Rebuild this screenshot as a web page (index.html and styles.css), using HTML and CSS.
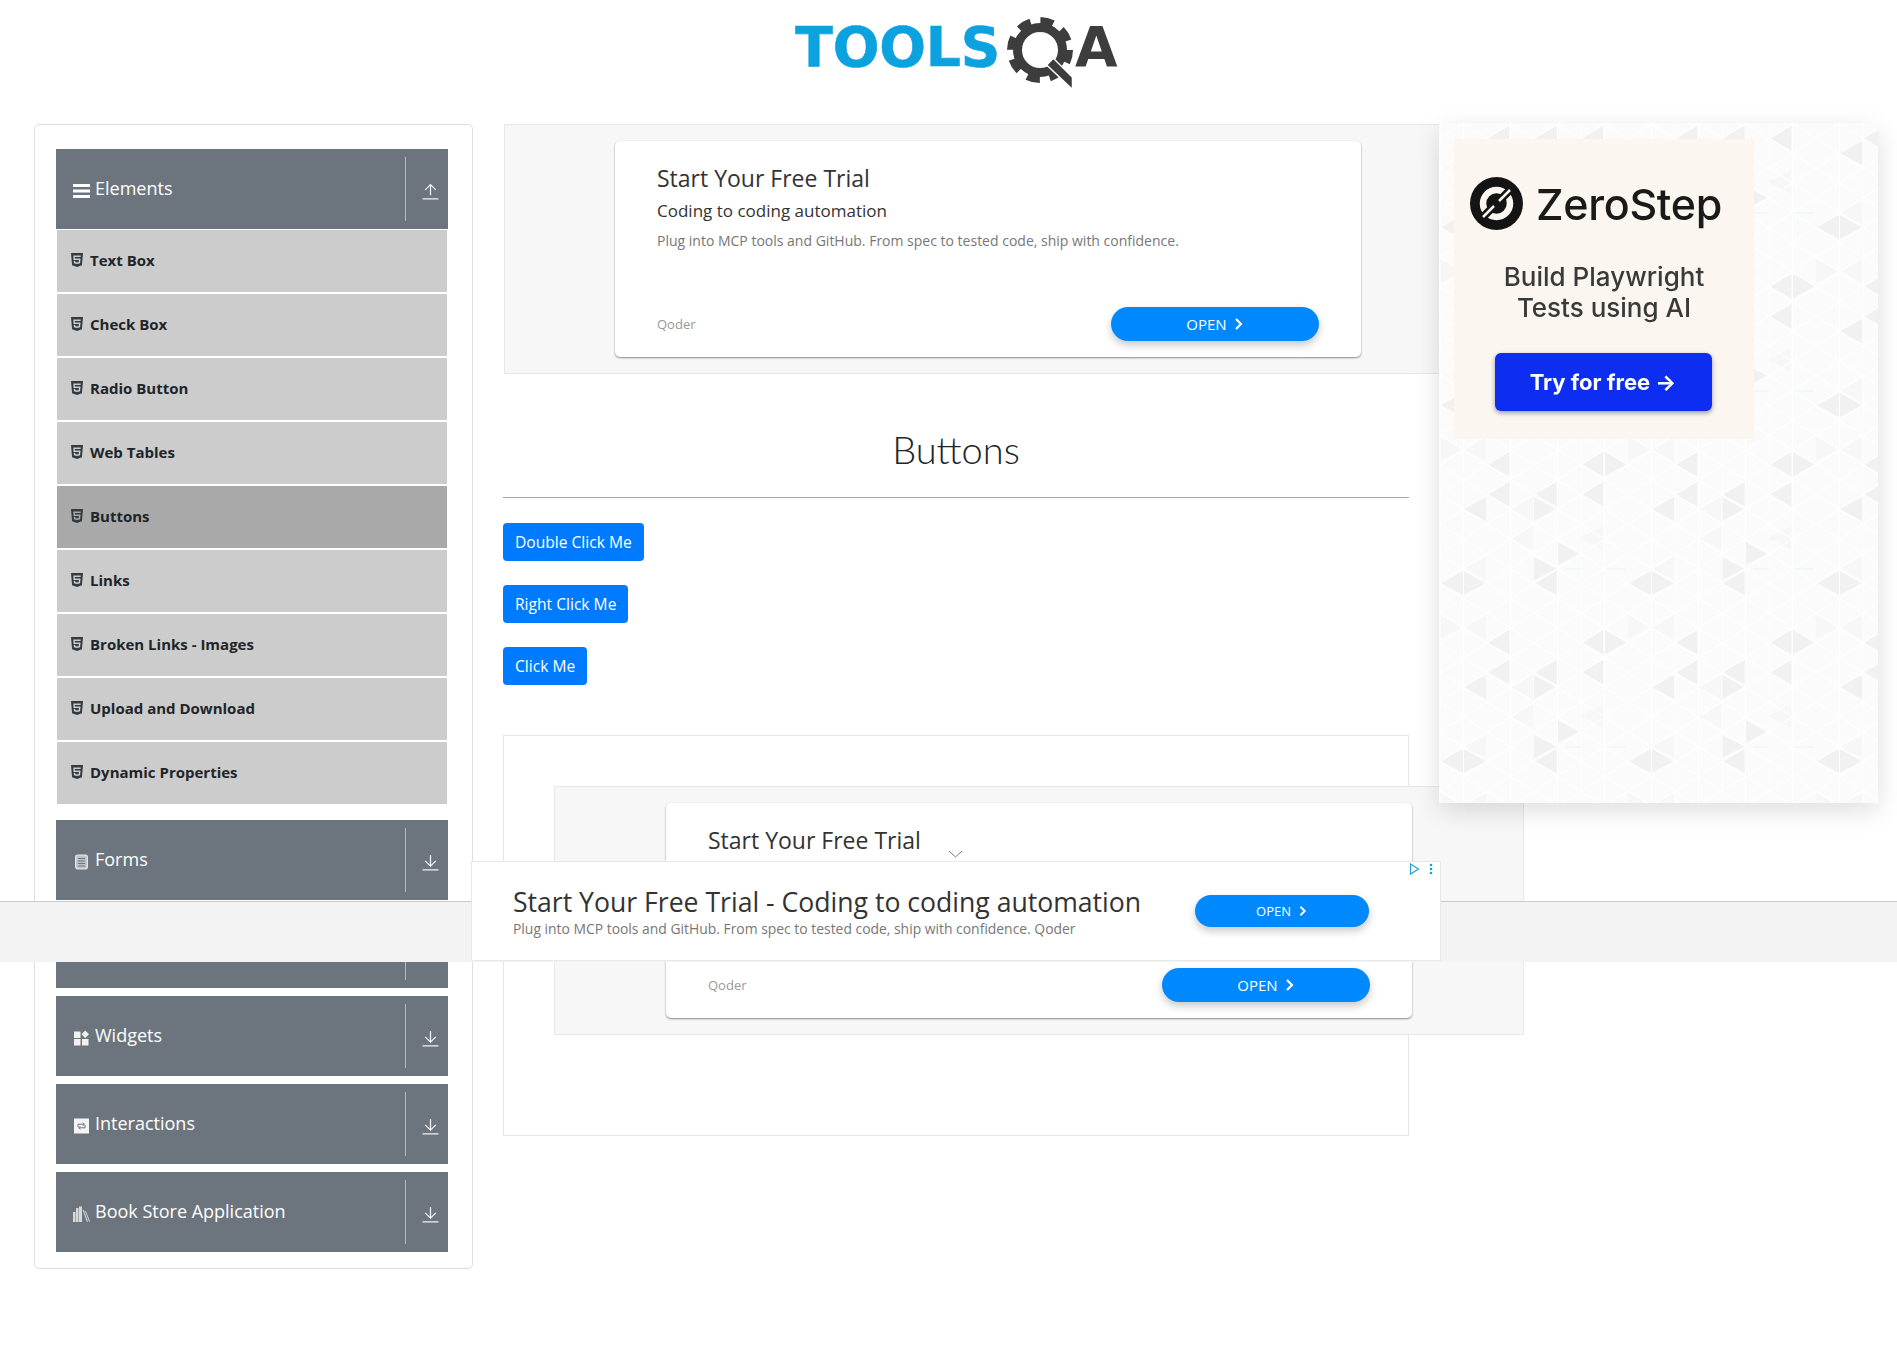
FILE: index.html
```html
<!DOCTYPE html>
<html>
<head>
<title>ToolsQA</title>
<link rel="stylesheet" href="styles.css">
</head>
<body>

<svg class="defs" width="0" height="0">
  <symbol id="i-html5" viewBox="0 0 384 512"><path d="M0 32l34.9 395.8L191.5 480l157.6-52.2L384 32H0zm308.2 127.9H124.4l4.1 49.4h175.6l-13.6 148.4-97.9 27v.3h-1.1l-98.7-27.3-6-75.8h47.7L138 320l53.5 14.5 53.7-14.5 6-62.2H84.3L71.5 112.2h241.1l-4.4 47.7z"/></symbol>
  <symbol id="i-up" viewBox="0 0 16 16"><path d="M8 11.500V1.500M3 6.500l5-5 5 5M.5 15h15" fill="none" stroke="currentColor" stroke-width="1.2"/></symbol>
  <symbol id="i-down" viewBox="0 0 16 16"><path d="M8 1v10.500M3 6.500l5 5 5-5M.5 15h15" fill="none" stroke="currentColor" stroke-width="1.2"/></symbol>
  <symbol id="i-chevron" viewBox="0 0 10 14"><path d="M2 2l5 5-5 5" fill="none" stroke="currentColor" stroke-width="2.2"/></symbol>
</svg>

<header class="logo">
  <span class="logo-tools">TOOLS</span>
  <svg class="logo-gear" width="68" height="76" viewBox="0 0 68 76">
    <g fill="none" stroke="#3d3d3d">
      <circle cx="34" cy="34" r="22.5" stroke-width="9"/>
      <circle cx="34" cy="34" r="29.5" stroke-width="7" stroke-dasharray="13.2 10"/>
    </g>
    <path d="M40.7 49 47.3 42.3 66.500 61.300V73.500z" fill="#3d3d3d" stroke="#fff" stroke-width="1.500"/>
  </svg>
  <span class="logo-a">A</span>
</header>

<div class="page">
  <aside class="sidebar">

    <section class="group">
      <div class="group-header">
        <svg class="group-icon" width="17" height="14" viewBox="0 0 17 14" fill="#fff"><rect y="0" width="17" height="3"/><rect y="5.500" width="17" height="3"/><rect y="11" width="17" height="3"/></svg>
        <span class="group-name">Elements</span>
        <span class="group-toggle"><svg width="16" height="16"><use href="#i-up"/></svg></span>
      </div>
      <ul class="menu">
        <li class="menu-item"><svg class="html5" width="12" height="16"><use href="#i-html5"/></svg>Text Box</li>
        <li class="menu-item"><svg class="html5" width="12" height="16"><use href="#i-html5"/></svg>Check Box</li>
        <li class="menu-item"><svg class="html5" width="12" height="16"><use href="#i-html5"/></svg>Radio Button</li>
        <li class="menu-item"><svg class="html5" width="12" height="16"><use href="#i-html5"/></svg>Web Tables</li>
        <li class="menu-item active"><svg class="html5" width="12" height="16"><use href="#i-html5"/></svg>Buttons</li>
        <li class="menu-item"><svg class="html5" width="12" height="16"><use href="#i-html5"/></svg>Links</li>
        <li class="menu-item"><svg class="html5" width="12" height="16"><use href="#i-html5"/></svg>Broken Links - Images</li>
        <li class="menu-item"><svg class="html5" width="12" height="16"><use href="#i-html5"/></svg>Upload and Download</li>
        <li class="menu-item"><svg class="html5" width="12" height="16"><use href="#i-html5"/></svg>Dynamic Properties</li>
      </ul>
    </section>

    <section class="group">
      <div class="group-header">
        <svg class="group-icon" width="17" height="16" viewBox="0 0 17 16"><rect x="2.600" y="1.200" width="11.800" height="13.600" rx="2" fill="#bfc2c5" stroke="#e4e5e6" stroke-width="1.200"/><path d="M5 4.500h7M5 7h7M5 9.500h7M5 12h7" stroke="#6c757d" stroke-width="1"/></svg>
        <span class="group-name">Forms</span>
        <span class="group-toggle"><svg width="16" height="16"><use href="#i-down"/></svg></span>
      </div>
    </section>

    <section class="group">
      <div class="group-header">
        <svg class="group-icon" width="17" height="16" viewBox="0 0 17 16"><rect x="1" y="1" width="7" height="7"/></svg>
        <span class="group-name">Alerts, Frame &amp; Windows</span>
        <span class="group-toggle"><svg width="16" height="16"><use href="#i-down"/></svg></span>
      </div>
    </section>

    <section class="group">
      <div class="group-header">
        <svg class="group-icon" width="17" height="16" viewBox="0 0 17 16" fill="#f1f1f1"><rect x="1" y="1.500" width="6.500" height="6.500"/><rect x="1" y="9" width="6.500" height="6.500"/><rect x="9" y="9" width="6.500" height="6.500"/><path d="M12.200.5 16 4.300l-3.800 3.700-3.700-3.700z"/></svg>
        <span class="group-name">Widgets</span>
        <span class="group-toggle"><svg width="16" height="16"><use href="#i-down"/></svg></span>
      </div>
    </section>

    <section class="group">
      <div class="group-header">
        <svg class="group-icon" width="17" height="16" viewBox="0 0 17 16"><rect x="1" y="0.500" width="15" height="15" fill="#f4f4f4"/><path d="M5 9V6.200h6M9.800 4.600l1.600 1.600-1.600 1.600M12 7v2.800H6M7.200 8.200 5.600 9.800l1.600 1.600" fill="none" stroke="#6c757d" stroke-width="1"/></svg>
        <span class="group-name">Interactions</span>
        <span class="group-toggle"><svg width="16" height="16"><use href="#i-down"/></svg></span>
      </div>
    </section>

    <section class="group">
      <div class="group-header">
        <svg class="group-icon" width="17" height="16" viewBox="0 0 17 16" fill="#d6d8da"><rect x="0" y="6" width="2.500" height="10"/><rect x="3" y="2" width="2.500" height="14"/><rect x="6" y="0.500" width="3" height="15.500"/><path d="M9.600 4 10.600 3.700 15 15.600 14 16zM12 5 12.800 4.800 17 15.600 16.200 16z"/></svg>
        <span class="group-name">Book Store Application</span>
        <span class="group-toggle"><svg width="16" height="16"><use href="#i-down"/></svg></span>
      </div>
    </section>

  </aside>

  <main class="content">
    <div class="ad-block">
      <div class="ad-card">
        <div>
          <div class="ad-title">Start Your Free Trial</div>
          <div class="ad-sub">Coding to coding automation</div>
          <div class="ad-desc">Plug into MCP tools and GitHub. From spec to tested code, ship with confidence.</div>
        </div>
        <div class="ad-foot">
          <span class="ad-brand">Qoder</span>
          <span class="ad-open">OPEN <svg width="10" height="14"><use href="#i-chevron"/></svg></span>
        </div>
      </div>
    </div>

    <h1 class="page-title">Buttons</h1>
    <hr class="rule">

    <div class="button-list">
      <button type="button" class="btn">Double Click Me</button>
      <button type="button" class="btn">Right Click Me</button>
      <button type="button" class="btn">Click Me</button>
    </div>

    <div class="lower-box">
      <div class="ad-block">
        <div class="ad-card">
          <div>
            <div class="ad-title">Start Your Free Trial</div>
          </div>
          <div class="ad-foot">
            <span class="ad-brand">Qoder</span>
            <span class="ad-open">OPEN <svg width="10" height="14"><use href="#i-chevron"/></svg></span>
          </div>
        </div>
      </div>
    </div>
  </main>
</div>

<!-- side ad, sits over the first banner -->
<aside class="side-ad">
  <svg class="side-pattern" width="439" height="680">
    <defs>
      <pattern id="lattice" width="47" height="29.67" patternUnits="userSpaceOnUse" patternTransform="translate(1 149)">
        <path d="M0 14.830 23.500 0 47 14.830 23.500 29.670z M23.500 0V29.670 M0 0V29.670" fill="none" stroke="#fff" stroke-width="1"/>
      </pattern>
      <pattern id="tris" width="188" height="178" patternUnits="userSpaceOnUse" patternTransform="translate(1 151)">
        <g fill="#f1f1f1">
          <path d="M47.300 12.200 69.300 0V24.300z M141.700 12.200 163.300 0V24.300z M165 0V24.300L186.700 12.200z"/>
          <path d="M47.300 42.200 69.300 30V54.300z M94 42.200 116.700 30V54.300z M141.700 42.200 163.300 30V54.300z"/>
          <path d="M23.300 57 46 45V69z M94 45V69L116 57z"/>
          <path d="M117.300 90V113.300L139 101.700z M94 105V128L116.700 116.500z"/>
          <path d="M0 131 23.300 119V143z M23.300 119V143L46.700 131z M94 131 116.700 119V143z"/>
        </g>
        <g fill="#f7f7f7">
          <path d="M70 57 93 45V69z M23.300 116.500 46 105V128z M70 86 93 74V98z M140 86 163 74V98z"/>
          <path d="M0 163V187L23.300 175z M0 -15V9L23.300 -3z M23.300 175 46 163V187z M23.300 -3 46 -15V9z"/>
        </g>
        <path d="M125 117h16M166 117h20" stroke="#eafafa" stroke-width="1.500"/>
      </pattern>
    </defs>
    <rect width="439" height="680" fill="#fbfbfb"/>
    <rect width="439" height="680" fill="url(#tris)"/>
    <rect width="439" height="680" fill="url(#lattice)"/>
  </svg>
  <div class="side-panel">
    <div class="side-brand">
      <svg width="53" height="53" viewBox="0 0 53 53">
        <circle cx="26.500" cy="26.500" r="26.500" fill="#141414"/>
        <circle cx="26.500" cy="26.500" r="13.500" fill="none" stroke="#fbf6f0" stroke-width="6.500"/>
        <path d="M12 41 41 12" stroke="#141414" stroke-width="8"/>
        <path d="M13 40 24 29M29 24 40 13" stroke="#fbf6f0" stroke-width="2.500"/>
      </svg>
      <span class="side-name">ZeroStep</span>
    </div>
    <div class="side-text">Build Playwright<br>Tests using AI</div>
    <span class="side-btn">Try for free →</span>
  </div>
</aside>

<!-- sticky banner at the bottom of the fold -->
<div class="sticky-band">
  <div class="sticky-ad">
    <svg class="sticky-close" width="15" height="8" viewBox="0 0 15 8"><path d="M1 1l6.500 6L14 1" fill="none" stroke="#777" stroke-width="1"/></svg>
    <svg class="adchoices" width="24" height="14" viewBox="0 0 24 14"><path d="M1.500 2 9.500 7 1.500 12z" fill="#fff" stroke="#29a3dd" stroke-width="1.300"/><circle cx="22" cy="3" r="1.300" fill="#1a9fd0"/><circle cx="22" cy="7" r="1.300" fill="#1a9fd0"/><circle cx="22" cy="11" r="1.300" fill="#1a9fd0"/></svg>
    <div class="sticky-text">
      <div class="sticky-title">Start Your Free Trial - Coding to coding automation</div>
      <div class="sticky-desc">Plug into MCP tools and GitHub. From spec to tested code, ship with confidence. Qoder</div>
    </div>
    <span class="sticky-open">OPEN <svg width="10" height="12"><use href="#i-chevron"/></svg></span>
  </div>
</div>

</body>
</html>
```

FILE: styles.css
```css
* {
  box-sizing: border-box;
}
body {
  margin: 0;
  height: 1370px;
  position: relative;
  overflow: hidden;
  background: #fff;
  font-family: "Open Sans", "Liberation Sans", sans-serif;
  color: #212529;
}
.defs {
  position: absolute;
}

/* logo */
.logo {
  height: 124px;
  display: flex;
  justify-content: center;
  align-items: flex-start;
  padding: 15px 0 0 19px;
  font-family: "DejaVu Sans", sans-serif;
  font-weight: bold;
  font-size: 55px;
  line-height: 64px;
}
.logo-tools {
  color: #0ca2e0;
  letter-spacing: -.2px;
  -webkit-text-stroke: .6px #0ca2e0;
}
.logo-gear {
  margin: 1px 0 0 6px;
  flex: none;
}
.logo-a {
  color: #3d3d3d;
  margin-left: 1px;
  letter-spacing: 3px;
}

.page {
  display: flex;
  align-items: flex-start;
  padding-left: 34px;
  gap: 30px;
}

/* sidebar */
.sidebar {
  width: 439px;
  flex: none;
  height: 1145px;
  padding: 24px 24px 15px 21px;
  border: 1px solid #dfdfdf;
  border-radius: 5px;
  display: flex;
  flex-direction: column;
  gap: 8px;
}
.group-header {
  height: 80px;
  background: #6c757d;
  color: #fff;
  display: flex;
  align-items: center;
  padding-left: 17px;
}
.group-icon {
  flex: none;
  margin-top: 3px;
  margin-right: 5px;
}
.group-name {
  flex: 1;
  font-size: 18px;
  white-space: nowrap;
  margin-bottom: 2px;
}
.group-toggle {
  width: 43px;
  height: 64px;
  flex: none;
  border-left: 1px solid #b5babe;
  display: flex;
  align-items: center;
  justify-content: center;
  padding: 4px 0 0 7px;
  color: #f1f1f1;
}
.group-toggle svg {
  width: 17px;
  height: 17px;
}
.menu {
  list-style: none;
  margin: 0 0 8px;
  padding: 0;
}
.menu-item {
  height: 62px;
  margin: 2px 1px 0;
  background: #ccc;
  display: flex;
  align-items: center;
  padding: 0 0 2px 14px;
  font-size: 15px;
  font-weight: 700;
}
.menu-item:first-child {
  margin-top: 1px;
}
.menu-item.active {
  background: #a9a9a9;
}
.html5 {
  margin-right: 7px;
  fill: #343a40;
}

/* main column */
.content {
  width: 906px;
  flex: none;
}
.ad-block {
  width: 970px;
  height: 250px;
  margin-left: 1px;
  padding: 16px 0 0 110px;
  background: #f7f7f7;
  border: 1px solid #e8e8e8;
}
.ad-card {
  width: 746px;
  height: 216px;
  background: #fff;
  border-radius: 5px;
  box-shadow: 0 1px 2px rgba(0, 0, 0, .45);
  padding: 22px 42px 16px;
  display: flex;
  flex-direction: column;
  justify-content: space-between;
}
.ad-title {
  font-size: 23px;
  line-height: 30px;
  color: #333;
}
.ad-sub {
  font-size: 17px;
  line-height: 22px;
  margin-top: 7px;
  color: #333;
}
.ad-desc {
  font-size: 14px;
  line-height: 20px;
  margin-top: 9px;
  color: #777;
}
.ad-foot {
  display: flex;
  justify-content: space-between;
  align-items: center;
}
.ad-brand {
  font-size: 13px;
  color: #999;
}
.ad-open {
  width: 208px;
  height: 34px;
  border-radius: 17px;
  background: #0088ff;
  box-shadow: 0 4px 8px rgba(0, 0, 0, .22);
  color: #fff;
  font-size: 15px;
  display: flex;
  align-items: center;
  justify-content: center;
  gap: 7px;
}
.page-title {
  margin: 0;
  padding: 51px 0 24px;
  text-align: center;
  font-family: Lato, sans-serif;
  font-size: 38px;
  line-height: 48px;
  font-weight: 300;
}
.rule {
  margin: 0;
  border: 0;
  height: 1px;
  background: #a8a8a8;
}
.button-list {
  display: flex;
  flex-direction: column;
  align-items: flex-start;
  gap: 24px;
  margin-top: 25px;
}
.btn {
  height: 38px;
  padding: 0 12px;
  border: 0;
  border-radius: 4px;
  background: #007bff;
  color: #fff;
  font-family: inherit;
  font-size: 15.6px;
}
.lower-box {
  height: 401px;
  margin-top: 50px;
  padding: 50px;
  border: 1px solid #e6e6e6;
}
.lower-box .ad-block {
  height: 249px;
  margin-left: 0;
  padding-left: 111px;
}
.lower-box .ad-card {
  height: 215px;
}

/* side ad */
.side-ad {
  position: absolute;
  left: 1439px;
  top: 123px;
  width: 439px;
  height: 680px;
  box-shadow: 0 8px 24px rgba(0, 0, 0, .13);
}
.side-pattern {
  position: absolute;
  left: 0;
  top: 0;
  display: block;
  filter: blur(.5px);
}
.side-panel {
  position: relative;
  width: 300px;
  height: 300px;
  margin: 16px 0 0 15px;
  background: #fbf6f0;
  font-family: Inter, sans-serif;
  display: flex;
  flex-direction: column;
  align-items: center;
  padding-top: 38px;
  filter: blur(.4px);
}
.side-brand {
  display: flex;
  align-items: center;
  gap: 13px;
  width: 100%;
  padding-left: 16px;
}
.side-name {
  font-size: 43px;
  font-weight: 500;
  letter-spacing: -.3px;
  color: #1a1a1a;
}
.side-text {
  margin-top: 31px;
  text-align: center;
  font-size: 26px;
  line-height: 31px;
  font-weight: 500;
  color: #3a3a3a;
}
.side-btn {
  margin: 30px 2px 0 0;
  width: 217px;
  height: 58px;
  border-radius: 6px;
  background: #0d2df0;
  box-shadow: 0 2px 5px rgba(0, 0, 60, .4);
  color: #fff;
  font-size: 22px;
  font-weight: 700;
  display: flex;
  align-items: center;
  justify-content: center;
}

/* sticky banner */
.sticky-band {
  position: absolute;
  left: 0;
  right: 0;
  top: 901px;
  height: 61px;
  background: #f3f3f3;
  border-top: 1px solid #ccc;
}
.sticky-ad {
  position: absolute;
  left: 471px;
  top: -41px;
  width: 970px;
  height: 100px;
  background: #fff;
  border: 1px solid #e8e8e8;
  padding: 0 71px 0 41px;
  display: flex;
  align-items: center;
  justify-content: space-between;
}
.sticky-close {
  position: absolute;
  left: 476px;
  top: -12px;
}
.adchoices {
  position: absolute;
  right: 7px;
  top: 0;
}
.sticky-title {
  font-size: 26.6px;
  line-height: 34px;
  color: #333;
}
.sticky-desc {
  font-size: 13.9px;
  line-height: 18px;
  margin-top: 1px;
  color: #777;
}
.sticky-open {
  width: 174px;
  height: 32px;
  border-radius: 16px;
  background: #0088ff;
  box-shadow: 0 4px 8px rgba(0, 0, 0, .22);
  color: #fff;
  font-size: 13px;
  display: flex;
  align-items: center;
  justify-content: center;
  gap: 7px;
}
```
